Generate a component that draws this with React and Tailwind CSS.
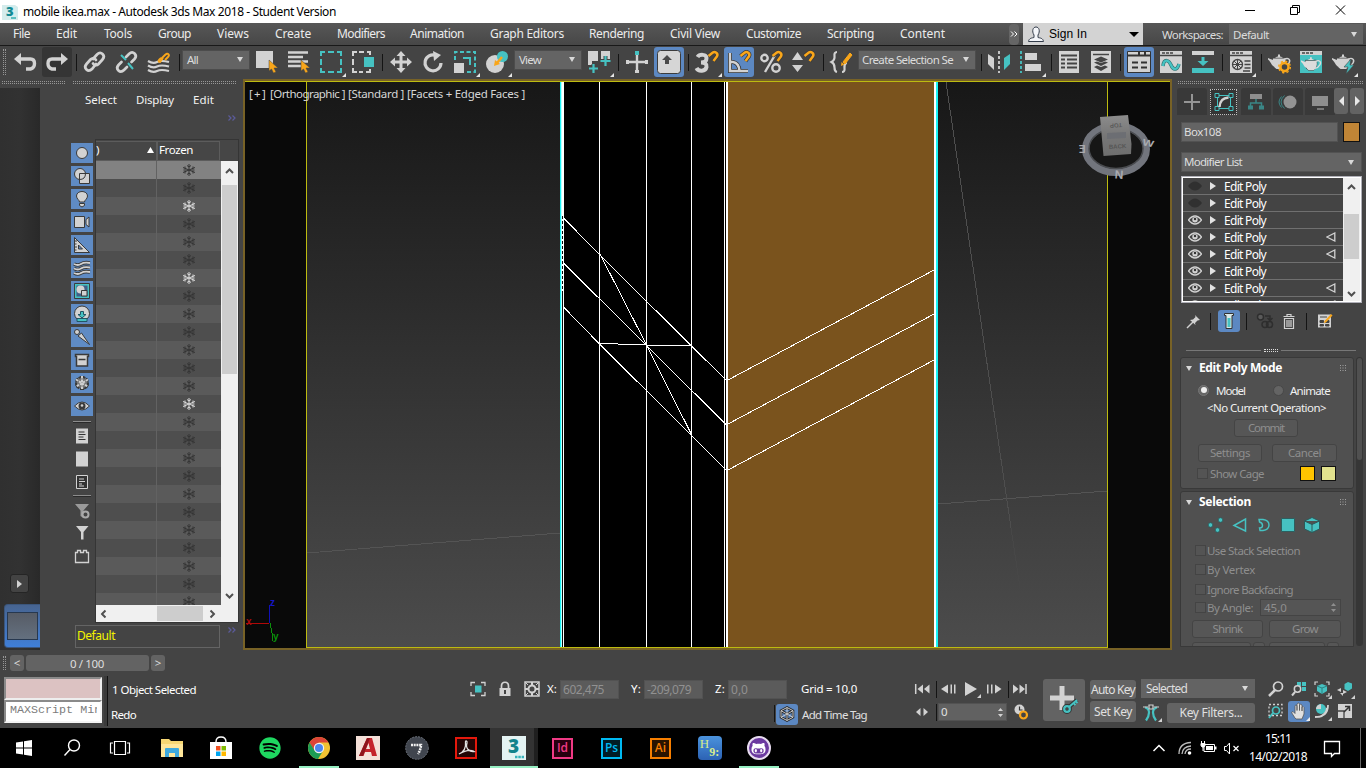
import React, { useLayoutEffect, useRef } from "react";
import { FaSpotify, FaGithubAlt } from "react-icons/fa";

const G = "#d2d2d2";
const T4 = "#46c2c2";
const OR = "#f9a61a";

/* Text run whose tracking is computed so that it spans w pixels */
function T({ w, className = "", children }) {
  const ref = useRef(null);
  useLayoutEffect(() => {
    const el = ref.current;
    if (!el || !w) return;
    el.style.letterSpacing = "0px";
    const n = el.textContent.length;
    el.style.letterSpacing = (w - el.getBoundingClientRect().width) / n + "px";
  }, [w, children]);
  return (
    <span ref={ref} className={"inline-block shrink-0 whitespace-pre leading-none " + className}>
      {children}
    </span>
  );
}

function I({ c = "", s = 22, fly, children }) {
  return (
    <svg className={"shrink-0 overflow-visible " + c} width={s} height={s} viewBox={`0 0 ${s} ${s}`} fill="none">
      {children}
      {fly && <path d={`M${s + 4} ${s}v4h-4z`} fill="#e6e6e6" />}
    </svg>
  );
}

const Sep = ({ c = "" }) => <div className={"h-[17px] w-px shrink-0 bg-[#141414] " + c} />;
const Down = ({ c = "" }) => (
  <svg className={"shrink-0 " + c} width="6" height="5" viewBox="0 0 6 5"><path d="M0 0h6L3 5z" fill="#d8d8d8" /></svg>
);
const DotsH = ({ c = "" }) => <div className={"h-[3px] border-y border-dotted border-[#969696] " + c} />;
const DotsV = ({ c = "" }) => <div className={"w-[3px] border-x border-dotted border-[#969696] " + c} />;
const Magnet = ({ x = 0, y = 0 }) => (
  <g transform={`translate(${x} ${y})`}>
    <path d="M1.500 5 5.500 1.800C8-.2 11.500 2.600 10 5.300L6.500 10" stroke="#3a3a3a" strokeWidth="4" />
    <path d="M1.500 5 5.500 1.800C8-.2 11.500 2.600 10 5.300L6.500 10" stroke={OR} strokeWidth="2.500" />
  </g>
);
const Combo = ({ c, children }) => (
  <div className={"flex h-5 shrink-0 items-center justify-between border border-[#4c4c4c] bg-[#646464] pl-1 pr-[6px] text-[11.5px] text-[#dcdcdc] -mt-[5px] " + c}>
    {children}
    <Down />
  </div>
);
const Teapot = ({ fill = G }) => (
  <g fill={fill}>
    <path d="M5 7.500h12c1.500 4 0 8.500-3 10.500H8.500C6 16.500 5 14 4.500 12z" />
    <path d="M0 7 6 9.500l0 6C3.500 14.500 3 11 0 8.500z" />
    <path d="M16 8.500c4-2.500 7 0 5 3.500-1 2-3 3.500-5.500 4" fill="none" stroke={fill} strokeWidth="1.500" />
    <path d="M7 6.800c2-1.800 6-1.800 8 0zM10 3.500h2v2h-2z" />
  </g>
);

function TitleBar() {
  return (
    <div className="flex h-[23px] items-center bg-white text-black">
      <svg className="ml-[2px] shrink-0" width="16" height="16" viewBox="0 0 16 16">
        <path d="M0 1h13l3 2v13H0z" fill="#d4ecec" />
        <text x="4" y="12" fontSize="13" className="font-['Open_Sans'] font-extrabold" fill="#128a94">3</text>
        <path d="M9 14h5" stroke="#35b0b0" strokeWidth="1.500" />
      </svg>
      <T w={313} className="ml-[5px] text-[12px]">mobile ikea.max - Autodesk 3ds Max 2018 - Student Version</T>
      <svg className="ml-auto mr-[15px] -mt-[3px]" width="106" height="12" viewBox="0 0 106 12" fill="none" stroke="#000">
        <path d="M0 6.500h10M45.500 3.500h7v7h-7zM47.500 3V1.500h7v7H53M91 1.500l9 9M100 1.500l-9 9" />
      </svg>
    </div>
  );
}

const menus = [
  ["File", 17, "ml-[13px]"], ["Edit", 21, "ml-[26px]"], ["Tools", 28, "ml-[27px]"], ["Group", 33, "ml-[26px]"],
  ["Views", 32, "ml-[26px]"], ["Create", 36, "ml-[26px]"], ["Modifiers", 48, "ml-[26px]"], ["Animation", 54, "ml-[25px]"],
  ["Graph Editors", 74, "ml-[26px]"], ["Rendering", 55, "ml-[25px]"], ["Civil View", 50, "ml-[26px]"],
  ["Customize", 55, "ml-[26px]"], ["Scripting", 47, "ml-[26px]"], ["Content", 45, "ml-[26px]"],
];

function MenuBar() {
  return (
    <div className="flex h-[23px] items-center border-b border-[#191919] bg-gradient-to-b from-[#575757] to-[#474747] text-[12px] text-[#ececec]">
      {menus.map(([t, w, c]) => <T key={t} w={w} className={c + " -mt-px"}>{t}</T>)}
      <div className="ml-[64px] flex h-[21px] w-[10px] items-center justify-center rounded-sm bg-[#656565]">
        <svg width="8" height="6" viewBox="0 0 8 6" fill="none" stroke="#fff"><path d="M1 .5 3.500 3 1 5.500M4.500.5 7 3 4.500 5.500" /></svg>
      </div>
      <div className="ml-1 flex h-[22px] w-[120px] items-center bg-[#d3d3d3] pl-[5px] pr-1 text-black">
        <svg width="16" height="16" viewBox="0 0 16 16" fill="#f4f6fa" stroke="#333c4a">
          <path d="M.5 15.500C1 12 4 12 6 11.500V9C3.500 5 5 1 8 1s4.500 4 2 8v2.500c2 .5 5 .5 5.500 4z" />
        </svg>
        <T w={38} className="ml-[5px] font-['Liberation_Sans'] text-[12px]">Sign In</T>
        <svg className="ml-auto" width="10" height="5" viewBox="0 0 10 5"><path d="M0 0h10L5 5z" /></svg>
      </div>
      <T w={61} className="ml-[19px] mt-px text-[11.5px] text-[#dcdcdc]">Workspaces:</T>
      <div className="ml-[6px] flex h-5 w-[134px] items-center justify-between bg-[#646464] pl-1 pr-[6px] text-[11.5px] text-[#dcdcdc]">
        <T w={36} className="mt-[2px]">Default</T><Down />
      </div>
    </div>
  );
}

function Toolbar() {
  const btn = "flex h-[30px] w-[30px] shrink-0 items-center justify-center rounded-[3px] ";
  return (
    <div className="flex h-[34px] items-center bg-[#444] pb-[2px] pl-[3px]">
      <DotsV c="h-[26px]" />
      <I c="ml-2"><path d="M7 8h9.500q4 0 4 4.500t-4 5.500H12" stroke={G} strokeWidth="3.400" /><path d="M0 8l7-6v12z" fill={G} /></I>
      <div className={btn + "ml-[6px] bg-[#353535]"}>
        <I><path d="M15 8H6q-4 0-4 4.500t4 5.500h4" stroke={G} strokeWidth="3.400" /><path d="M22 8l-7-6v12z" fill={G} /></I>
      </div>
      <Sep c="ml-1" />
      <I c="ml-[7px]"><g stroke={G} strokeWidth="2.700" strokeLinecap="round"><path d="M9 8l4-4.500c4-4 9 1 5.500 5l-4 4.500c-2 2-4.500 1-5.500-.5" /><path d="M12 13l-4 5c-4 4-9-1-5.500-5l4-4.500c2-2 4.500-1 5.500.5" /></g></I>
      <I c="ml-[10px]"><g stroke={G} strokeWidth="2.700" strokeLinecap="round"><path d="M10 6l3-3c4-4 9 1 5.500 5l-3 3" /><path d="M11 16l-3 3c-4 4-9-1-5.500-5l3-3" /></g><path d="M5 4l5 5M12 12l5 6" stroke={T4} strokeWidth="2" /></I>
      <I c="ml-[10px]"><path d="M0 10q5 3 9 1t12 0M0 14.500q5 3 9 1t12 0M0 19q5 3 9 1t12 0" stroke={G} strokeWidth="2.200" /><path d="M13 8l4-4c3-3 5 0 3 2l-3 3M15 7l-3 4c-2 0-2-2 1-4" stroke={OR} strokeWidth="1.900" /></I>
      <Sep c="ml-[9px]" />
      <Combo c="ml-[2px] w-[68px]"><T w={11}>All</T></Combo>
      <I c="ml-[6px]"><path d="M0 0h17v17H0z" fill={G} /><path d="M13 9v11l2.500-2 2 4 2.500-1-2-4h4z" fill={OR} stroke="#444" strokeWidth=".5" /></I>
      <I c="ml-[10px]"><path d="M0 1.500h20M0 6h15M0 10.500h20M0 15h13" stroke={G} strokeWidth="2.600" /><path d="M13 9v11l2.500-2 2 4 2.500-1-2-4h4z" fill={OR} stroke="#444" strokeWidth=".5" /></I>
      <I c="ml-[10px]" fly><path d="M1 5V1h4M8 1h6M17 1h4v4M21 8v6M21 17v4h-4M14 21H8M5 21H1v-4M1 14V8" stroke={T4} strokeWidth="2" /></I>
      <I c="ml-[10px]"><path d="M1 5V1h4M7 1h5M15 1h3v3M18 18v3h-4M11 21H7M5 21H1v-4M1 14V8" stroke={G} strokeWidth="2" /><path d="M12 6h10v10H12z" fill={T4} /></I>
      <Sep c="ml-2" />
      <I c="ml-[7px]"><path d="M11 2v18M2 11h18" stroke={G} strokeWidth="3" /><path d="M11 0l4.500 5h-9zM11 22l4.500-5h-9zM0 11l5-4.500v9zM22 11l-5-4.500v9z" fill={G} /></I>
      <I c="ml-[10px]"><path d="M13.500 4.200A8 8 0 1 0 19 12" stroke={G} strokeWidth="3.200" /><path d="M11 0l8 4-7 6z" fill={G} /></I>
      <I c="ml-[10px]" fly><path d="M1 9V1h20v20h-9" stroke={T4} strokeWidth="2" strokeDasharray="4 2.500" /><path d="M0 12h10v10H0z" fill={G} /><path d="M9 7h7v7" stroke={T4} strokeWidth="2" /></I>
      <I c="ml-[10px]" fly><circle cx="9" cy="13" r="9" fill={G} /><circle cx="16.500" cy="5.500" r="5.500" fill={T4} /><path d="M16 6l-5 6" stroke={OR} strokeWidth="2.500" /><path d="M8 15l1-6 5 4z" fill={OR} /></I>
      <Combo c="ml-[6px] w-[68px]"><T w={22}>View</T></Combo>
      <I c="ml-[6px]" fly><path d="M0 0h10v10H4v4H0zM13 0h9v8h-9z" fill={G} /><path d="M5.500 13v9M1 17.500h9M17.500 5v10M12.500 10h10" stroke="#444" strokeWidth="4" /><path d="M5.500 13v9M1 17.500h9M17.500 5v10M12.500 10h10" stroke={T4} strokeWidth="2.200" /></I>
      <Sep c="ml-2" />
      <I c="ml-[7px]"><path d="M11 3v19M1 11h20" stroke={G} strokeWidth="2.400" /><path d="M0 9h3v4H0zM19 9h3v4h-3zM9 19h4v3H9z" fill={G} /><path d="M9 0h4v4H9z" fill={T4} /></I>
      <div className={btn + "ml-[6px] bg-[#5c88c2]"}>
        <I><rect x="-.5" y="-.5" width="23" height="23" rx="3" fill="#d6d6d6" stroke="#3c3c3c" /><path d="M9 4l5 5h-3v4H7V9H4z" fill="#4a4a4a" /></I>
      </div>
      <Sep c="ml-1" />
      <I c="ml-[7px]" fly><path d="M1.500 6c2-3 9-3 9 1S8 11.500 5 11.500c4 0 6 1.500 5.500 4.500-1 4.500-8 5-10 1" stroke={G} strokeWidth="4" /><Magnet x={11} y={0} /></I>
      <div className={btn + "ml-[6px] bg-[#5c88c2]"}>
        <I><path d="M2 2v18h18M2 11h3q6 1 6.500 9" stroke="#333" strokeWidth="4" /><path d="M2 2v18h18M2 11h3q6 1 6.500 9" stroke={G} strokeWidth="2.400" /><Magnet x={11} y={0} /></I>
      </div>
      <I c="ml-[6px]"><circle cx="4.500" cy="7" r="3.200" stroke={G} strokeWidth="2.400" /><circle cx="16" cy="17" r="3.700" stroke={G} strokeWidth="2.400" /><path d="M15 4L5 21" stroke={G} strokeWidth="2.400" /><Magnet x={11} y={0} /></I>
      <I c="ml-[10px]"><path d="M5.500 1l5.500 8H0zM5.500 21l5.500-7H0z" fill={G} /><Magnet x={11} y={0} /></I>
      <Sep c="ml-[9px]" />
      <I c="ml-[7px]"><path d="M6 1Q3 1 3.500 5t-3 6q3 1.500 3 5.500T6 21M11 21q3 0 2.500-4t2-5.500" stroke={G} strokeWidth="2.200" /><path d="M12 11l2 2 7-9-2-2z" fill={OR} stroke={OR} /><path d="M10 15l.5-4 3 2.500z" fill={OR} /></I>
      <Combo c="ml-[5px] w-[118px]"><T w={91} className="-ml-px">Create Selection Se</T></Combo>
      <Sep c="ml-[5px]" />
      <I c="ml-[6px]"><path d="M0 3l6 4v12l-6-6z" fill={G} /><path d="M22 3l-6 4v12l6-6z" fill={T4} /><path d="M11 0v22" stroke={G} strokeWidth="1.800" strokeDasharray="3 2" /></I>
      <I c="ml-[10px]" fly><path d="M1 0v22" stroke={T4} strokeWidth="1.800" strokeDasharray="3 2" /><path d="M5 2h12v7H5zM5 13h16v7H5z" fill={G} /></I>
      <Sep c="ml-[9px]" />
      <I c="ml-[6px]"><path d="M1 0h20v22H1z" fill={G} /><path d="M3 4.500h16M3 8.500h4M9 8.500h10M3 12.500h4M9 12.500h10M3 16.500h4M9 16.500h10" stroke="#444" strokeWidth="2" /></I>
      <I c="ml-[10px]"><path d="M1 0h20v22H1z" fill={G} /><path d="M3 3.500h16" stroke="#444" strokeWidth="1.500" /><path d="M11 5.500l7 3-7 3-7-3zM4 11.500l3-1 4 1.500 4-1.500 3 1-7 3.500zM4 16l3-1.500 4 1.500 4-1.500 3 1.500-7 4z" fill="#444" /></I>
      <Sep c="ml-2" />
      <div className={btn + "ml-[3px] bg-[#5c88c2]"}>
        <I><path d="M-.5.500h23v21h-23z" fill={G} stroke="#333" /><path d="M0 4.500h22M11 0v4M17 0v4M4 11.500h6M13 11.500h6M4 16.500h6M13 16.500h6" stroke="#333" strokeWidth="2" /></I>
      </div>
      <I c="ml-[6px]"><path d="M0 0h22v22H0z" fill={G} /><path d="M0 4.500h22M2 2h3M6 2h3M10 2h3" stroke="#444" strokeWidth="1.500" /><path d="M3 15c1-8 6-6 8-1s6 6 8-1" stroke="#2e6f6f" strokeWidth="3.500" /><path d="M3 15c1-8 6-6 8-1s6 6 8-1" stroke={T4} strokeWidth="2.300" /></I>
      <I c="ml-[10px]"><path d="M0 0h22v4H0z" fill={G} /><path d="M0 17h22v5H0zM9.500 6h3v4h4L11 15l-5.500-5h4z" fill={T4} /></I>
      <Sep c="ml-2" />
      <I c="ml-[7px]" fly><path d="M0 0h22v22H0z" fill={G} /><path d="M0 4.500h22M2 2h3M6 2h3M10 2h3M14.500 10h6M14.500 13.500h6M14.500 17h6M13 20h7" stroke="#444" strokeWidth="1.500" /><circle cx="7.500" cy="13.500" r="5" stroke="#444" strokeWidth="1.300" /><path d="M4 10l7 7M11 10l-7 7M7.500 8.500v10M2.500 13.500h10" stroke="#444" /></I>
      <Sep c="ml-[9px]" />
      <I c="ml-[6px]"><Teapot /><circle cx="16.500" cy="16" r="4" fill="#444" stroke={OR} strokeWidth="2.500" /><circle cx="16.500" cy="16" r="5.800" stroke={OR} strokeWidth="1.500" strokeDasharray="2.200 2.350" /></I>
      <I c="ml-[10px]"><path d="M0 0h22v22H0z" fill={T4} /><path d="M0 0h22v4H0z" fill={G} /><path d="M2 2h3M6 2h3M10 2h3" stroke="#444" strokeWidth="1.500" /><g transform="translate(1 3) scale(.9)"><path d="M5 7h12c1.500 4 0 8.500-3 11H8.500C6 17 5 14 4.500 12z" stroke="#333" /><Teapot fill="#dcdcdc" /></g></I>
      <I c="ml-[10px]" fly><Teapot /><path d="M19 8l-7 8h4l-2 7 8-9h-4z" fill={T4} stroke="#444" strokeWidth=".6" /></I>
    </div>
  );
}

const Flake = ({ color }) => (
  <svg width="12" height="12" viewBox="0 0 12 12" fill="none" stroke={color}>
    <path d="M6 0v12M0 3.500l12 5M12 3.500l-12 5M4 1.500l2 1.500 2-1.500M4 10.500l2-1.500 2 1.500M.5 6h3M8.500 6h3M2 2.500v2M10 2.500v2M2 7.500v2M10 7.500v2" />
  </svg>
);
const Chev = ({ r = "" }) => (
  <svg className={"shrink-0 " + r} width="9" height="6" viewBox="0 0 9 6" fill="none" stroke="#505050" strokeWidth="2"><path d="M1 5l3.500-3.500L8 5" /></svg>
);
const More = ({ c }) => (
  <svg className={c} width="8" height="6" viewBox="0 0 8 6" fill="none" stroke="#5c5c9c" strokeWidth="1.200"><path d="M.5.500 3 3 .5 5.500M4.500.5 7 3 4.500 5.500" /></svg>
);

const D = "#3a3a3a";
const filters = [
  <circle cx="8" cy="8" r="5.500" fill={G} stroke={D} />,
  <><circle cx="6" cy="6" r="5.500" fill={G} stroke={D} /><path d="M5.500 5.500h10v10h-10z" fill={G} stroke={D} /><path d="M5.500 11.500q6 0 6-6" stroke={D} /></>,
  <><path d="M5.500 11c0-2-3-3-3-6 0-6 11-6 11 0 0 3-3 4-3 6z" fill={G} stroke={D} /><path d="M5.500 12.500h5v2l-2.500 1.500-2.500-1.500z" fill={G} stroke={D} /></>,
  <path d="M.5 2.500h10v11H.5zM12 5.500l3-2.500v10l-3-2.500z" fill={G} stroke={D} />,
  <path d="M.5.500l15 15H.5zM4.500 8v4h4zM1 4h2M1 7h1.500M1 10h2M1 13h1.500" fill={G} stroke={D} fillRule="evenodd" />,
  <><path d="M0 4q4 2 7 0t9-1M0 8.500q4 2 7 0t9-1M0 13q4 2 7 0t9-1" stroke={D} strokeWidth="3.600" /><path d="M0 4q4 2 7 0t9-1M0 8.500q4 2 7 0t9-1M0 13q4 2 7 0t9-1" stroke={G} strokeWidth="1.800" /></>,
  <><path d="M.5.500h15v15H.5z" stroke={D} /><path d="M1.700 1.700h12.600v12.600H1.700z" fill="#3f5f88" stroke={T4} strokeWidth="1.500" /><circle cx="6.500" cy="6.500" r="4" fill={G} /><path d="M7.500 7.500h5.500v5.500H7.500z" fill={G} stroke={D} /></>,
  <><circle cx="8" cy="7.500" r="7.500" fill={G} stroke={D} /><path d="M6.500 5.500h3v3h2.500L8 12 4 8.500h2.500z" fill={T4} stroke="#256" /><path d="M3 12.500h10v3H3z" fill={T4} stroke="#256" /></>,
  <><circle cx="3" cy="3" r="2.500" fill={G} stroke={D} /><path d="M4 7l3.500-3 8 11.500z" fill={G} stroke={D} /></>,
  <path d="M1.500 2.500h13v2h-1v9.500h-11V4.500h-1zM4.500 7.500h7" fill={G} stroke={D} strokeWidth="1.500" />,
  <><path d="M8 1v14M2 4.500l12 7M14 4.500l-12 7" stroke={D} strokeWidth="4" /><circle cx="8" cy="8" r="6" fill="#777" stroke={D} strokeWidth="2" strokeDasharray="3 1" /><path d="M8 1v14M2 4.500l12 7M14 4.500l-12 7" stroke="#cfcfcf" strokeWidth="2" strokeDasharray="2.500 1" /></>,
  <><path d="M.5 8q7.500-8 15 0-7.500 8-15 0z" fill={G} stroke={D} /><circle cx="8" cy="8" r="3.500" fill={D} /><circle cx="8" cy="7.500" r="1.300" fill={G} /></>,
];

function LeftPanel() {
  const sep = "h-[2px] w-[18px] border-t border-[#8c8c8c] bg-[#2a2a2a]";
  return (
    <div className="flex h-[570px] w-[243px] shrink-0 flex-col bg-[#444]">
      <div className="flex h-[8px] items-start pt-px">
        <DotsH c="ml-[2px] w-[63px]" /><DotsH c="ml-2 w-[163px]" />
      </div>
      <div className="flex h-[562px]">
        <div className="flex w-10 flex-col bg-gradient-to-r from-[#303030] via-[#323232] to-[#292929] pb-[2px]">
          <div className="ml-[10px] mt-[486px] flex h-[19px] w-[19px] items-center justify-center rounded-[3px] border border-[#252525] bg-[#434343]">
            <svg width="5" height="8" viewBox="0 0 5 8"><path d="M0 0l5 4-5 4z" fill={G} /></svg>
          </div>
          <div className="ml-1 mt-[11px] h-11 rounded-l border border-r-0 border-[#3b567c] bg-gradient-to-b from-[#476490] to-[#3f7fd8] pl-[2px] pt-[7px]">
            <div className="h-7 w-[31px] border border-[#27384f] bg-gradient-to-b from-[#575c66] to-[#64707f]" />
          </div>
        </div>
        <div className="flex w-[203px] flex-col">
          <div className="flex h-[24px] items-center text-[11.500px] text-[#f2f2f2]">
            <T w={32} className="ml-[45px]">Select</T><T w={38} className="ml-[19px]">Display</T><T w={21} className="ml-[19px]">Edit</T>
          </div>
          <More c="ml-[188px] mt-[3px]" />
          <div className="mt-[18px] flex h-[484px]">
            <div className="ml-[31px] flex w-[22px] flex-col items-center pt-1">
              {filters.map((f, i) => (
                <div key={i} className="mb-[3px] flex h-5 w-[22px] shrink-0 items-center justify-center bg-[#5f8bc4]"><I s={16}>{f}</I></div>
              ))}
              <div className={sep + " mt-[2px]"} />
              <I s={16} c="mt-[5px]"><path d="M2 .5h12v15H2z" fill={G} /><path d="M4.500 4h6M4.500 6.500h7M4.500 9h5M4.500 11.500h7" stroke="#333" /></I>
              <I s={16} c="mt-[7px]"><path d="M2 .5h12v15H2z" fill={G} /></I>
              <I s={16} c="mt-[7px]"><path d="M2.500 1.500h11v13h-11z" fill="#333" stroke={G} /><path d="M5 5h5M5 7.500h6M5 10h3M5 12h5" stroke={G} /></I>
              <div className={sep + " mt-[5px]"} />
              <I s={16} c="mt-[6px]"><path d="M1 1h14L9.500 7.500V15l-3-2V7.500z" fill="#9a9a9a" /><circle cx="11.500" cy="11.500" r="3" fill="#444" stroke="#aaa" strokeWidth="2" /></I>
              <I s={16} c="mt-[6px]"><path d="M2 1h12.500L9.500 7v7.500h-2.500V7z" fill={G} /></I>
              <I s={16} c="mt-[8px]"><path d="M1.500 3.500h2v-2h3v2h3v-2h3v2h2v10h-13z" stroke={G} strokeWidth="1.300" /></I>
            </div>
            <div className="ml-[2px] flex w-[144px] flex-col border border-[#353535] bg-[#464646]">
              <div className="flex h-[21px] items-center">
                <div className="flex h-[20px] w-[61px] items-center justify-between border border-l-0 border-[#5c5c5c] pb-[2px] pr-[2px] text-[11.500px] text-white">
                  <T w={3}>)</T>
                  <svg width="7" height="6" viewBox="0 0 7 6"><path d="M0 6h7L3.500 0z" fill="#fff" /></svg>
                </div>
                <div className="flex h-[20px] w-[63px] items-center border border-[#5c5c5c] pb-[2px] pl-px text-[11.500px] text-white"><T w={34}>Frozen</T></div>
              </div>
              <div className="flex h-[444px]">
                <div className="h-[444px] w-[125px] overflow-hidden">
                  {Array.from({ length: 25 }, (_, i) => {
                    const bg = i === 0 ? "bg-[#828282]" : i % 2 ? "bg-[#4e4e4e]" : "bg-[#5a5a5a]";
                    return (
                      <div key={i} className={"flex h-[18px] " + bg}>
                        <div className="h-[18px] w-[61px] border-r border-[#626262]" />
                        <div className="flex w-[63px] items-center justify-center">
                          <Flake color={[2, 6, 13].includes(i) ? "#dcdcdc" : i === 0 ? "#333" : "#343434"} />
                        </div>
                      </div>
                    );
                  })}
                </div>
                <div className="flex w-[17px] flex-col items-center bg-[#f0f0f0] pt-[7px]">
                  <Chev /><div className="mt-[11px] h-[189px] w-[15px] shrink-0 bg-[#cdcdcd]" /><Chev r="mt-[219px] rotate-180" />
                </div>
              </div>
              <div className="flex h-[17px] items-center bg-[#f0f0f0]">
                <Chev r="ml-[3px] -rotate-90" /><div className="ml-[49px] h-[15px] w-[46px] bg-[#cdcdcd]" /><Chev r="ml-[5px] rotate-90" />
              </div>
            </div>
          </div>
          <div className="mt-[2px] flex h-[23px]">
            <div className="ml-[35px] flex w-[145px] items-center border border-[#646464] pl-px text-[12px] text-[#f4f400]"><T w={38} className="-mt-[2px]">Default</T></div>
            <More c="ml-2 mt-[2px]" />
          </div>
        </div>
      </div>
    </div>
  );
}

function Viewport() {
  return (
    <div className="relative h-[571px] w-[929px] shrink-0 bg-[#786226]">
      <svg width="929" height="571" viewBox="243 79 929 571" shapeRendering="crispEdges" fill="none">
        <defs>
          <linearGradient id="sky" x1="0" y1="0" x2="0" y2="1"><stop offset="0" stopColor="#171717" /><stop offset="1" stopColor="#4c4c4c" /></linearGradient>
          <linearGradient id="cube" x1="0" y1="0" x2="0" y2="1"><stop offset="0" stopColor="#8c8c8c" /><stop offset=".5" stopColor="#777" /><stop offset="1" stopColor="#6e6e6e" /></linearGradient>
        </defs>
        <path d="M245 81h925v567H245z" fill="#090909" />
        <path d="M306 81h802v567H306z" fill="url(#sky)" />
        <path d="M307 553l253-20M938 504l169-13" stroke="#545454" />
        <path d="M946 82l65 446" stroke="#4e4e4e" /><path d="M1011 528l9 60" stroke="#474747" />
        <path d="M564 82h161v565H564z" fill="#000" />
        <path d="M727 82h208v565H727z" fill="#7a531d" />
        <path d="M560 82h2v565h-2zM936 82h2v565h-2z" fill="#18f4f6" />
        <path d="M561 82h1v565h-1z" fill="#b8ffff" />
        <path d="M562 82h1v565h-1z" fill="#0a0a0a" />
        <path d="M562 82h1v132h-1z" fill="#fff" /><path d="M562.500 214v80" stroke="#fff" strokeDasharray="2 3" />
        <path d="M563 82h1v565h-1zM599 82h1v565h-1zM646 82h1v565h-1zM691 82h1v565h-1zM724 82h1v565h-1zM726 82h2v565h-2zM934 82h2v565h-2z" fill="#fff" />
        <path d="M725 82h1v565h-1z" fill="#000" />
        <g stroke="#fff">
          <path d="M563 217.500l36 36.500" /><path d="M599 254l92 91.500" /><path d="M691 345.500l35 34.500" />
          <path d="M563 262.500l83 82.500" /><path d="M646 345l80 79.500" />
          <path d="M563 306.500l36 37" /><path d="M599 343.500l92 91.500" /><path d="M691 435l35 35" />
          <path d="M600 254l46.500 91" /><path d="M646.500 345l45 89.500" /><path d="M599 343.500h19" /><path d="M618 344.500h28" /><path d="M646 345.500h45.500" />
          <path d="M727 380.500l208-111M727 424.500l208-111M727 470.500l208-111" />
        </g>
        <path d="M306.500 81.500h801v566h-801z" stroke="#bdbb10" />
        <path d="M245 81.500h925" stroke="#bdbb10" />
        <path d="M245 648.500h925" stroke="#786226" />
        <g shapeRendering="auto">
          <ellipse cx="1116" cy="149" rx="27" ry="20" fill="#161616" />
          <ellipse cx="1116" cy="149" rx="30.500" ry="23.500" stroke="#72757d" strokeWidth="7" />
          <ellipse cx="1116" cy="148.500" rx="27" ry="20" stroke="#4a4c50" strokeWidth="1.500" />
          <path d="M1100 117l28-2 3.500 29-.5 10-27.500 2z" fill="url(#cube)" />
          <path d="M1107 133l19-1v6l-19 1z" fill="#6c6e73" />
          <g className="font-['Liberation_Sans'] font-bold" fill="#a9abb0">
            <text transform="translate(1085.500 145) rotate(180)" fontSize="10">E</text>
            <text transform="translate(1142 145) rotate(12) scale(1.100 .85)" fontSize="11">W</text>
            <text transform="translate(1114.500 178.500) rotate(3)" fontSize="12">N</text>
            <text transform="translate(1122 123) rotate(177)" fontSize="6" fill="#5a5a5a">TOP</text>
            <text transform="translate(1109 149) rotate(-3)" fontSize="6" fill="#555">BACK</text>
          </g>
        </g>
        <path d="M246 623.500h23" stroke="#b00808" /><path d="M269.500 605v18" stroke="#1010b8" /><path d="M270.500 623v5M271.500 628v5M272.500 633v8" stroke="#0a900a" />
        <g className="font-['Liberation_Sans'] font-bold" fontSize="10">
          <text x="246" y="625" fill="#a80c0c">x</text><text x="270" y="606" fill="#1616c8">z</text><text x="273" y="640" fill="#0a900a">y</text>
        </g>
      </svg>
      <div className="absolute left-[6px] top-[9px] flex gap-[3px] text-[11.500px] text-[#d6d6d6]">
        <T w={18}>[+]</T><T w={75}>[Orthographic ]</T><T w={56}>[Standard ]</T><T w={118}>[Facets + Edged Faces ]</T>
      </div>
    </div>
  );
}

const Check = ({ c = "" }) => <div className={"h-[11px] w-[11px] shrink-0 border border-[#444] bg-[#545454] " + c} />;
const Btn = ({ c, children }) => (
  <div className={"flex shrink-0 items-center justify-center rounded-[3px] border border-[#444] bg-[#565656] text-[11.500px] text-[#8e8e8e] " + c}>{children}</div>
);
const Grip6 = () => (
  <svg width="6" height="6" viewBox="0 0 6 6" stroke="#a0a0a0" strokeDasharray="1 1.500"><path d="M0 .5h6M0 3h6M0 5.500h6" /></svg>
);
const RollTitle = ({ w, children }) => (
  <div className="flex h-5 shrink-0 items-center pl-[5px] pr-[7px] text-[12px] font-bold text-white">
    <Down /><T w={w} className="ml-[7px]">{children}</T><div className="ml-auto"><Grip6 /></div>
  </div>
);

function StackRow({ dim, tri }) {
  return (
    <div className="flex h-[17px] shrink-0 items-center border-b border-[#707070] pl-[5px]">
      <svg width="14" height="10" viewBox="0 0 14 10">
        {dim ? <path d="M0 5q7-9 14 0-7 9-14 0z" fill="#303030" /> : <><path d="M.5 5q6.500-8 13 0-6.500 8-13 0z" fill="none" stroke={G} strokeWidth="1.400" /><circle cx="7" cy="4.800" r="2.700" fill={G} /><circle cx="7" cy="4" r="1.200" fill="#333" /></>}
      </svg>
      <svg className="ml-[8px]" width="6" height="8" viewBox="0 0 6 8"><path d="M0 0l6 4-6 4z" fill="#e2e2e2" /></svg>
      <T w={42} className="ml-[8px] mt-px text-[12px] text-white">Edit Poly</T>
      {tri && <svg className="ml-[60px]" width="10" height="10" viewBox="0 0 10 10"><path d="M.8 5l8-4v8z" fill="none" stroke={G} strokeWidth="1.300" /></svg>}
    </div>
  );
}

function RightPanel() {
  const tab = "flex h-[27px] w-[30px] shrink-0 items-center justify-center rounded-t-[3px] bg-[#393939] ";
  return (
    <div className="flex h-[570px] w-[194px] shrink-0 flex-col overflow-hidden bg-[#444]">
      <DotsH c="ml-[6px] mt-px w-[185px] shrink-0" />
      <div className="mt-[4px] flex h-[27px] shrink-0 pl-[5px]">
        <div className={tab}><I s={18}><path d="M9 1v16M1 9h16" stroke="#959595" strokeWidth="2" /></I></div>
        <div className="ml-[3px] mt-px flex h-[26px] w-[27px] shrink-0 items-center justify-center border border-dotted border-[#c0c0c0] bg-[#353535]">
          <I s={18}><path d="M2.500 2.500h13v13h-13z" stroke={T4} /><path d="M0 .5h4v4H0zM14 .5h4v4h-4zM0 13.500h4v4H0zM14 13.500h4v4h-4z" fill="#353535" stroke={T4} /><path d="M4.500 14Q5 5 13.500 4.500" stroke={G} strokeWidth="2.500" /></I>
        </div>
        <div className={tab + "ml-[4px]"}><I s={18}><path d="M3 1h12v5H3z" fill="#8e8e8e" /><path d="M9 6v4M3.500 14v-4h11v4" stroke="#3a8686" strokeWidth="1.500" /><path d="M1 12.500h5v4H1zM12 12.500h5v4h-5z" fill="#3a8686" /></I></div>
        <div className={tab + "ml-[2px]"}><I s={18}><circle cx="11" cy="9" r="6.500" fill="#939393" /><path d="M5.500 2.500q-7 6.500 0 13M2.500 3.500q-5 5.500 0 11" stroke="#3a8686" /></I></div>
        <div className={tab + "ml-[2px]"}><I s={18}><path d="M1 3h16v10H1z" fill="#8e8e8e" /><path d="M6 16h7" stroke="#8e8e8e" strokeWidth="1.500" /></I></div>
        <div className="-ml-px flex h-[26px] w-[14px] shrink-0 items-center justify-center rounded-[3px] bg-[#636363]"><svg width="5" height="10" viewBox="0 0 5 10"><path d="M5 0v10L0 5z" fill="#e8e8e8" /></svg></div>
        <div className="ml-[2px] flex h-[26px] w-[14px] shrink-0 items-center justify-center rounded-[3px] bg-[#636363]"><svg width="5" height="10" viewBox="0 0 5 10"><path d="M0 0v10l5-5z" fill="#e8e8e8" /></svg></div>
      </div>
      <div className="mt-[7px] flex h-5 shrink-0 pl-[9px]">
        <div className="flex h-5 w-[157px] items-center border border-[#525252] bg-[#646464] pl-[2px] text-[11.500px] text-[#dedede]"><T w={37}>Box108</T></div>
        <div className="ml-[5px] h-5 w-[17px] border border-[#111] bg-[#c08536]" />
      </div>
      <div className="ml-[9px] mt-[10px] flex h-5 w-[181px] shrink-0 items-center justify-between border border-[#525252] bg-[#646464] pl-[2px] pr-[7px] text-[11.500px] text-[#dedede]"><T w={58}>Modifier List</T><Down /></div>
      <div className="ml-[9px] mt-[4px] flex h-[127px] w-[181px] shrink-0 border-2 border-white outline outline-1 -outline-offset-1 outline-[#b0b0b8]">
        <div className="flex w-[160px] flex-col overflow-hidden bg-[#444]">
          <StackRow dim /><StackRow dim /><StackRow /><StackRow tri /><StackRow tri /><StackRow /><StackRow tri /><StackRow tri />
        </div>
        <div className="flex w-[17px] flex-col items-center bg-[#f0f0f0]">
          <Chev r="mt-[6px]" /><div className="mt-[24px] h-[45px] w-[15px] bg-[#cdcdcd]" /><Chev r="mt-[32px] rotate-180" />
        </div>
      </div>
      <div className="mt-[7px] flex h-[22px] shrink-0 items-center">
        <I s={16} c="ml-[14px]"><path d="M1 15l6-6" stroke={G} strokeWidth="1.500" /><path d="M9 2l5 5-2.500.5-2.500 2.500.5 2L4 7l3-.5 2.500-2.500z" fill={G} /></I>
        <Sep c="ml-[8px]" />
        <div className="ml-[7px] flex h-[22px] w-[22px] items-center justify-center rounded-[3px] bg-[#5c88c2]"><I s={16}><path d="M3.500.500h9v2h-1.500v13H5v-13H3.500z" fill="#d8e8e8" stroke="#333" /><path d="M6.500 5h3v9h-3z" fill={T4} /></I></div>
        <Sep c="ml-[6px]" />
        <I s={16} c="ml-[10px]"><g stroke="#2e2e2e" strokeWidth="1.500"><circle cx="3.500" cy="4" r="3" fill="#5a5a5a" /><circle cx="8" cy="11.500" r="3" /><circle cx="12.500" cy="11.500" r="3" /><path d="M8 3h5v4M10.500 5l2.500 2.500L15.500 5" /></g></I>
        <I s={16} c="ml-[8px]"><path d="M2.500 3.500h11M6 3V1.500h4V3M3.500 5.500h9v10h-9zM6 7v7M8 7v7M10 7v7" stroke={G} strokeWidth="1.200" /></I>
        <Sep c="ml-[9px]" />
        <I s={16} c="ml-[10px]"><path d="M1 1.500h13v13H1z" fill={G} /><path d="M3 4h7M3 7.500h3.500v2H3zM8.500 7.500H12v2H8.500zM3 11.500h3.500v1.500H3zM8.500 11.500H12v1.500H8.500z" fill="#444" stroke="#444" /><path d="M7.500 8L14 1l1.500 1.500-6.500 7-2 .5z" fill={OR} /></I>
      </div>
      <div className="mt-[16px] flex h-[5px] shrink-0 items-center pl-[14px]">
        <div className="h-px w-[75px] bg-[#777]" /><div className="ml-[3px] h-[3px] w-[14px] border-y border-dotted border-[#ddd]" /><div className="ml-[3px] h-px w-[75px] bg-[#777]" />
      </div>
      <div className="mt-[4px] flex h-[290px] shrink-0">
        <div className="ml-[8px] flex w-[174px] flex-col">
          <div className="h-[132px] shrink-0 rounded-[3px] border border-[#393939] bg-[#505050] text-[11.500px] text-[#f0f0f0]">
            <RollTitle w={83}>Edit Poly Mode</RollTitle>
            <div className="mt-[4px] flex h-[16px] items-center">
              <div className="ml-[17px] flex h-[11px] w-[11px] items-center justify-center rounded-full border border-[#777] bg-[#666]"><div className="h-[6px] w-[6px] rounded-full bg-[#efefef]" /></div>
              <T w={29} className="ml-[7px] mt-px">Model</T>
              <div className="ml-[28px] h-[11px] w-[11px] rounded-full border border-[#484848] bg-[#646464]" />
              <T w={40} className="ml-[6px] mt-px">Animate</T>
            </div>
            <div className="mt-px h-[16px] pl-[26px]"><T w={119}>&lt;No Current Operation&gt;</T></div>
            <div className="flex pl-[53px] pt-[4px]"><Btn c="h-[18px] w-[64px]"><T w={36}>Commit</T></Btn></div>
            <div className="mt-[7px] flex pl-[17px]"><Btn c="h-[18px] w-[64px]"><T w={40}>Settings</T></Btn><Btn c="ml-[10px] h-[18px] w-[65px]"><T w={33}>Cancel</T></Btn></div>
            <div className="mt-[3px] flex h-[16px] items-center text-[#8e8e8e]"><Check c="ml-[16px]" /><T w={54} className="ml-[2px] mt-px">Show Cage</T>
              <div className="ml-[36px] h-[15px] w-[15px] border border-[#111] bg-[#ffc400]" /><div className="ml-[6px] h-[15px] w-[15px] border border-[#111] bg-[#e2e28e]" /></div>
          </div>
          <div className="mt-[2px] flex h-[156px] shrink-0 flex-col overflow-hidden rounded-t-[3px] border border-[#393939] bg-[#505050] text-[11.500px] text-[#8e8e8e]">
            <RollTitle w={52}>Selection</RollTitle>
            <div className="mt-[5px] flex h-4 shrink-0 items-center pl-[27px]">
              <I s={16}><g fill={T4} stroke="#2a5c5c" strokeWidth=".8"><circle cx="2.500" cy="8" r="2.300" /><circle cx="12.500" cy="3" r="2.300" /><circle cx="9.500" cy="13" r="2.300" /></g></I>
              <I s={16} c="ml-[8px]"><path d="M2 8.500L13.500 2v12z" stroke={T4} strokeWidth="1.500" /></I>
              <I s={16} c="ml-[8px]"><path d="M3 2.500h4c8 1 8 10 0 11H4l-.5-2.500c4 0 4-5 0-6z" stroke={T4} strokeWidth="1.400" /></I>
              <I s={16} c="ml-[8px]"><path d="M1.500 1.500h13v13h-13z" fill={T4} stroke="#2c6060" /></I>
              <I s={16} c="ml-[8px]"><path d="M8 .5l7.500 3.500v8L8 15.500.5 12V4zM.5 4L8 7.500 15.500 4M8 7.500v8" fill={T4} stroke="#2c5a5a" /></I>
            </div>
            <div className="mt-[9px] flex h-[16px] shrink-0 items-center"><Check c="ml-[14px]" /><T w={93} className="ml-px mt-[2px]">Use Stack Selection</T></div>
            <div className="mt-[3px] flex h-[16px] shrink-0 items-center"><Check c="ml-[14px]" /><T w={48} className="ml-px mt-[2px]">By Vertex</T></div>
            <div className="mt-[4px] flex h-[16px] shrink-0 items-center"><Check c="ml-[14px]" /><T w={86} className="ml-px mt-[2px]">Ignore Backfacing</T></div>
            <div className="mt-[2px] flex h-[17px] shrink-0 items-center"><Check c="ml-[14px]" /><T w={46} className="ml-px mt-px">By Angle:</T>
              <div className="ml-[7px] flex h-[17px] w-[81px] items-center justify-between border border-[#444] bg-[#555] pl-[3px] pr-1"><T w={23}>45,0</T><Spin c="#8e8e8e" /></div></div>
            <div className="mt-[4px] flex shrink-0 pl-[11px]"><Btn c="h-[18px] w-[71px]"><T w={30}>Shrink</T></Btn><Btn c="ml-[6px] h-[18px] w-[72px]"><T w={26}>Grow</T></Btn></div>
            <div className="mt-[4px] flex shrink-0 pl-[11px]"><Btn c="h-4 w-[59px]" /><Btn c="ml-[2px] h-4 w-3" /><Btn c="ml-[4px] h-4 w-[56px]" /><Btn c="ml-[2px] h-4 w-3" /></div>
          </div>
        </div>
        <div className="ml-[2px] h-[289px] w-[7px] rounded-full bg-[#363636] p-px"><div className="h-[102px] rounded-full bg-[#505050]" /></div>
      </div>
    </div>
  );
}

const Spin = ({ c = G }) => <svg width="5" height="9" viewBox="0 0 5 9"><path d="M2.500 0L5 3H0zM2.500 9L5 6H0z" fill={c} /></svg>;
const Field = ({ w, children }) => (
  <div className="ml-[3px] flex h-[19px] w-[59px] items-center border border-[#525252] bg-[#5b5b5b] pl-[2px] text-[12px] text-[#919191]"><T w={w} className="mt-px">{children}</T></div>
);

function StatusBar() {
  const key = "flex items-center justify-center rounded-[3px] bg-[#636363] text-[12px] text-[#e0e0e0] ";
  return (
    <div className="flex h-[78px] flex-col bg-[#444]">
      <div className="flex h-[26px] items-center pl-[3px] text-[11.500px] text-[#dedede]">
        <DotsV c="h-[14px]" />
        <div className="ml-[4px] flex h-4 w-[14px] items-center justify-center rounded-[3px] bg-[#636363]">&lt;</div>
        <div className="ml-[2px] flex h-4 w-[123px] items-center justify-center rounded-[3px] bg-[#636363]"><T w={34} className="-ml-px mt-px">0 / 100</T></div>
        <div className="ml-[2px] flex h-4 w-[14px] items-center justify-center rounded-[3px] bg-[#636363]">&gt;</div>
      </div>
      <div className="flex h-[52px]">
        <div className="ml-1 flex w-[98px] flex-col pt-px">
          <div className="h-[23px] border-2 border-b-[#eee] border-l-[#8a8a8a] border-r-[#eee] border-t-[#8a8a8a] bg-[#dcc2c2]" />
          <div className="h-[23px] overflow-hidden border-2 border-b-[#f4f4f4] border-l-[#8a8a8a] border-r-[#f4f4f4] border-t-[#8a8a8a] bg-white pl-1 pr-[3px]">
            <div className="h-[19px] w-[87px] overflow-hidden whitespace-pre font-['Liberation_Mono'] text-[11.700px] leading-[17px] text-[#7c7c7c]">MAXScript Min</div>
          </div>
        </div>
        <div className="ml-[2px] h-[50px] w-1 border-r border-[#111] bg-[#3a3a3a]" />
        <div className="flex w-[363px] flex-col pl-[3px] text-[11.500px] text-white">
          <T w={84} className="ml-px mt-[8px] self-start">1 Object Selected</T>
          <T w={25} className="mt-[13px] self-start">Redo</T>
        </div>
        <div className="flex w-[444px] flex-col text-[11.500px] text-white">
          <div className="flex h-[26px] items-center">
            <I s={16} c="-ml-px"><path d="M1 5V1.500h4M11 1.500h4V5M15 11v3.500h-4M5 14.500H1V11" stroke={G} strokeWidth="1.300" /><path d="M5 4.500h6.500v7H5z" fill={T4} /></I>
            <I s={16} c="ml-[11px]"><path d="M2.500 7h11v8h-11z" fill={G} /><path d="M4.500 7V5c0-5 7-5 7 0v2" stroke={G} strokeWidth="1.700" /><path d="M8 9v4" stroke="#333" strokeWidth="1.800" /></I>
            <I s={16} c="ml-[11px]"><path d="M1 1h14v14H1z" fill="#444" stroke={G} strokeWidth="1.500" /><circle cx="8" cy="8" r="3.500" stroke={G} strokeWidth="2" /><path d="M8 1v3M8 12v3M1 8h3M12 8h3" stroke={G} strokeWidth="2" /><path d="M1 1l3 3M15 1l-3 3M1 15l3-3M15 15l-3-3" stroke={G} /></I>
            <T w={10} className="ml-[7px]">X:</T><Field w={41}>602,475</Field>
            <T w={10} className="ml-[12px]">Y:</T><Field w={44}>-209,079</Field>
            <T w={10} className="ml-[12px]">Z:</T><Field w={17}>0,0</Field>
            <T w={56} className="ml-[14px]">Grid = 10,0</T>
          </div>
          <div className="flex h-[24px] items-center pl-[303px]">
            <Sep c="-mt-px" />
            <div className="ml-px flex h-[21px] w-[22px] items-center justify-center rounded-[3px] bg-[#5c88c2]"><I s={16}><path d="M8 1.500l6 3.200v6.600L8 14.500l-6-3.200V4.700zM2 4.700L8 8l6-3.300M8 8v6.500" stroke="#2a2a2a" strokeWidth="2.600" /><path d="M8 1.500l6 3.200v6.600L8 14.500l-6-3.200V4.700zM2 4.700L8 8l6-3.300M8 8v6.500M2 11.300L8 8l6 3.300M8 1.500V8" stroke={G} strokeWidth=".9" /></I></div>
            <T w={65} className="ml-1 mt-px text-[#e0e0e0]">Add Time Tag</T>
          </div>
        </div>
        <div className="flex w-[128px] flex-col">
          <div className="flex h-[26px] items-center">
            <I s={16}><path d="M.7 3v10" stroke={G} strokeWidth="1.500" /><path d="M8 3.500v9L2.500 8zM14.500 3.500v9L9 8z" fill={G} /></I>
            <Sep c="ml-[5px]" />
            <I s={16} c="ml-[4px]"><path d="M7 3.500v9L0 8z" fill={G} /><path d="M9.500 3.500h1.500v9H9.500zM13 3.500h1.500v9H13z" fill={G} /></I>
            <I s={16} c="ml-[7px]"><path d="M1 1l12 7-12 7z" fill={G} /><path d="M17 13v4h-4z" fill={G} /></I>
            <I s={16} c="ml-[6px]"><path d="M9 3.500v9L15.500 8z" fill={G} /><path d="M1 3.500h1.500v9H1zM5 3.500h1.500v9H5z" fill={G} /></I>
            <Sep c="ml-[6px]" />
            <I s={16} c="ml-[3px]"><path d="M14 3v10" stroke={G} strokeWidth="1.500" /><path d="M1 3.500v9L6.500 8zM7.500 3.500v9L13 8z" fill={G} /></I>
          </div>
          <div className="flex h-[20px] items-center">
            <I s={14}><path d="M5.500 3v8L1 7zM8.500 3v8L13 7z" fill={G} /></I>
            <Sep c="ml-[7px]" />
            <div className="ml-px flex h-[18px] w-[69px] items-center justify-between border border-[#525252] bg-[#616161] pl-[2px] pr-[3px] text-[11.500px] text-[#e0e0e0]"><T w={6}>0</T><Spin /></div>
            <I s={16} c="ml-[6px]"><circle cx="6.500" cy="5.500" r="5" fill={G} /><path d="M6.500 2.500v3.500h3" stroke="#333" strokeWidth="1.200" /><circle cx="10.500" cy="11" r="3.500" fill="#444" stroke={OR} strokeWidth="2.200" /></I>
          </div>
        </div>
        <div className={key + "mt-[3px] h-[42px] w-[42px]"}>
          <I s={30}><path d="M13 1v24M1 13h24" stroke={G} strokeWidth="5" /><circle cx="18" cy="24" r="2.800" stroke="#333" strokeWidth="4.200" /><path d="M20 22l8-7" stroke="#333" strokeWidth="4.200" /><circle cx="18" cy="24" r="2.800" stroke={T4} strokeWidth="2.200" /><path d="M20 22l8-7M24.500 18l2 2M26.500 16l2 2" stroke={T4} strokeWidth="2" /></I>
        </div>
        <div className="ml-[5px] mt-[4px] flex w-[46px] flex-col"><div className={key + "h-[19px]"}><T w={44}>Auto Key</T></div><div className={key + "mt-[2px] h-[21px]"}><T w={38}>Set Key</T></div></div>
        <div className="ml-[5px] mt-[3px] flex w-[114px] flex-col">
          <div className="flex h-[19px] items-center justify-between bg-[#636363] pl-[5px] pr-[7px] text-[12px] text-[#dedede]"><T w={41} className="mt-px">Selected</T><Down /></div>
          <div className="mt-[4px] flex h-[21px] items-center"><I s={18} c="ml-[2px]"><path d="M2 3.500q4 1 4 5t-3 8M14 3.500q-4 1-4 5t3 8" stroke={T4} strokeWidth="2.200" /><path d="M6 1h4v4H6z" stroke={G} strokeWidth="1.200" /><path d="M0 3h5M11 3h5" stroke={G} /><path d="M19 14v4h-4z" fill={G} /></I><div className={key + "ml-[6px] h-[20px] w-[88px]"}><T w={63} className="mt-px">Key Filters...</T></div></div>
        </div>
        <div className="ml-[13px] mt-[2px] grid h-[44px] grid-cols-[23px_23px_23px_23px] grid-rows-[22px_22px] items-center">
          <I s={16}><circle cx="10" cy="5.500" r="4.500" stroke={G} strokeWidth="1.700" /><path d="M7 9l-6 6" stroke={G} strokeWidth="2.500" /></I>
          <I s={16}><path d="M6 1h4v4H6zM11 1h4v4h-4zM11 6h4v4h-4z" fill={T4} /><circle cx="6.500" cy="8" r="3.200" fill="#444" stroke={G} strokeWidth="1.500" /><path d="M4 11l-3 3.500" stroke={G} strokeWidth="2" /></I>
          <I s={16}><path d="M1 4V1h3M12 1h3v3M15 12v3h-3M4 15H1v-3" stroke={G} strokeWidth="1.200" /><path d="M8 3l5 2v5l-5 3-5-3V5z" fill={T4} /><path d="M3 5l5 2 5-2M8 7v6" stroke="#2f8080" /><path d="M18 14v4h-4z" fill={G} /></I>
          <I s={16}><path d="M11 1l4 1.500v5L11 10 7.500 8V3z" fill={T4} /><path d="M0 9l4-2v4zM6 9l4 2-4 2zM3 12h3v3z" fill={G} /><path d="M18 14v4h-4z" fill={G} /></I>
          <I s={16}><path d="M1 1.500h13v11H1z" stroke={G} strokeWidth="1.300" strokeDasharray="2 2" /><circle cx="8" cy="7.500" r="3.500" fill="#444" stroke={T4} strokeWidth="1.700" /><path d="M5 10l-4 5" stroke={T4} strokeWidth="2" /></I>
          <div className="-ml-[3px] flex h-[21px] w-[22px] items-center justify-center rounded-[3px] bg-[#5c88c2]"><I s={18}><path d="M5 16L1.500 10.500l1.500-1 2 2V4.500Q5 3 6 3t1 1.500v4V2.500Q7.500 1 8.500 1T9.500 2.500v6-5.500Q10.500 1.500 12 3v6-4q1.500-1 2 .5V12l-2 5H6z" fill="#e0e0e0" stroke="#555" strokeWidth=".8" /><path d="M20 15v4h-4z" fill="#eee" /></I></div>
          <I s={16}><circle cx="7" cy="6" r="5" fill={T4} /><path d="M7 1q-5 1-5 5h5z" fill={G} /><path d="M1 14Q14 14 14 2M5 14q7-2 8-9" stroke={G} strokeWidth="1.800" /><path d="M18 14v4h-4z" fill={G} /></I>
          <I s={16}><path d="M1 1h14v14H1z" fill={G} /><path d="M1 8h6v7" stroke="#444" strokeWidth="1.300" /><path d="M7 9l5-5M8 3.500h4.500V8" stroke="#333" strokeWidth="1.500" /></I>
        </div>
      </div>
    </div>
  );
}

function Adobe({ t, c }) {
  return <div className={"flex h-[21px] w-[21px] items-center justify-center border-2 font-['Open_Sans'] text-[12px] font-semibold leading-none " + c}>{t}</div>;
}

function Taskbar() {
  const cell = "flex h-10 w-[49px] shrink-0 items-center justify-center ";
  return (
    <div className="flex h-10 items-center bg-black text-white">
      <div className="flex h-10 w-12 items-center justify-center"><svg width="16" height="16" viewBox="0 0 16 16" fill="#fff"><path d="M0 2.500l7-1v6H0zM8 1.300L16 0v7.500H8zM0 8.500h7v6l-7-1zM8 8.500h8V16l-8-1.300z" /></svg></div>
      <div className="flex h-10 w-12 items-center justify-center"><I s={18}><circle cx="11" cy="6.500" r="5.500" stroke="#fff" strokeWidth="1.400" /><path d="M7 10.500L1.500 16.500" stroke="#fff" strokeWidth="1.400" /></I></div>
      <div className="flex h-10 w-[48px] items-center justify-center"><I s={20}><path d="M4.500 3.500h11v13h-11zM3 5H.5v10H3M17 5h2.500v10H17" stroke="#fff" strokeWidth="1.200" /></I></div>
      <div className={cell + "ml-[3px]"}><I s={22}><path d="M0 2h8l2 2h12v16H0z" fill="#f7d774" /><path d="M0 7h22v13H0z" fill="#ffe69a" /><path d="M4 20v-8q0-1 1-1h12q1 0 1 1v8h-4v-4H8v4z" fill="#3fa9dd" /></I></div>
      <div className={cell}><I s={24}><path d="M7 6q0-5 5-5t5 5" stroke="#fff" strokeWidth="1.400" /><path d="M1 6h22v17H1z" fill="#fff" /><path d="M7 10h4.500v4.500H7z" fill="#f25022" /><path d="M12.500 10H17v4.500h-4.500z" fill="#7fba00" /><path d="M7 15.500h4.500V20H7z" fill="#00a4ef" /><path d="M12.500 15.500H17V20h-4.500z" fill="#ffb900" /></I></div>
      <div className={cell + "text-[22px] text-[#1ed760]"}><FaSpotify /></div>
      <div className="flex h-10 w-[49px] shrink-0 flex-col items-center pt-[9px]">
        <I s={22}><circle cx="11" cy="11" r="11" fill="#f1c232" /><path d="M11 5.500h9.500A11 11 0 0 0 1.500 5.500l5 8.500z" fill="#db4437" /><path d="M1.500 5.500A11 11 0 0 0 10 22l5-8H7z" fill="#1c9b54" /><circle cx="11" cy="11" r="5.200" fill="#f2f2f2" /><circle cx="11" cy="11" r="4" fill="#4b86ee" /></I>
        <div className="mt-[7px] h-[2px] w-10 bg-[#96efc2]" />
      </div>
      <div className={cell}><I s={24}><path d="M0 0h24v24H0z" fill="#f4e0d8" /><path d="M3 20L11 2h5l5 18h-5l-1-4H9l-1.500 4zM10 13h4L12.500 7z" fill="#c4232b" fillRule="evenodd" /><path d="M11 2h3L7 20H3z" fill="#8d141b" /></I></div>
      <div className={cell}><I s={24}><circle cx="12" cy="12" r="11.300" fill="#40454e" stroke="#6c727c" strokeDasharray="2 1" /><path d="M6 9h10q0 4-3 9" stroke="#f0f0f0" strokeWidth="2.500" strokeDasharray="2 .7" /></I></div>
      <div className={cell}><I s={22}><path d="M1 1h20v20H1z" fill="#220505" stroke="#e4180c" strokeWidth="2" /><path d="M4 17c5-2 7-7 6.500-12 0-2 2-1 1.500 1-2 6 3 9 7 8.500-4-2.500-9-1-15 2.500z" stroke="#e0e0e0" strokeWidth="1.300" /></I></div>
      <div className="flex h-10 w-12 shrink-0 flex-col items-center border-r-4 border-[#1f1f1f] bg-[#333] pt-2">
        <I s={24} c="ml-[4px]"><path d="M0 0h24v24H0z" fill="#e4f3f3" /><text x="6" y="17" fontSize="19" className="font-['Open_Sans'] font-extrabold" fill="#14838c">3</text><path d="M13 21h9" stroke="#38b4bc" strokeWidth="2.500" strokeDasharray="2.500 .8" /></I>
        <div className="mt-[6px] h-[2px] w-12 shrink-0 translate-x-[2px] bg-[#96efc2]" />
      </div>
      <div className={cell}><Adobe t="Id" c="border-[#f03a85] bg-[#27000f] text-[#f03a85]" /></div>
      <div className={cell}><Adobe t="Ps" c="border-[#00b9f2] bg-[#001c26] text-[#00b9f2]" /></div>
      <div className={cell}><Adobe t="Ai" c="border-[#f77f00] bg-[#2a1400] text-[#f77f00]" /></div>
      <div className={cell}><div className="flex h-6 w-6 justify-center rounded-sm bg-gradient-to-b from-[#4b93dd] to-[#2c62b4] font-['Liberation_Serif'] leading-none text-[#d6ec8c]"><span className="mt-px text-[13px]">H</span><span className="mt-[10px] text-[12px] font-bold">9:</span></div></div>
      <div className="flex h-10 w-[49px] shrink-0 flex-col items-center pt-2">
        <div className="flex h-6 w-6 items-center justify-center rounded-full border-2 border-[#e8dcf0] bg-[#6c3aa0] text-[15px] text-white"><FaGithubAlt /></div>
        <div className="mt-[6px] h-[2px] w-10 bg-[#96efc2]" />
      </div>
      <I s={14} c="ml-[369px]"><path d="M1.500 10l5.500-5.500 5.500 5.500" stroke="#fff" strokeWidth="1.500" /></I>
      <I s={14} c="ml-[12px]"><g stroke="#bbb" strokeWidth="1.300"><path d="M1 13Q1 2 13 1.500M4 13Q4.500 5.500 13 5M7 13q.5-5 6-5" /></g><circle cx="11.500" cy="12" r="1.800" fill="#fff" /></I>
      <I s={16} c="ml-[8px]"><path d="M4 4.500h10.500v7H4z" stroke="#fff" /><path d="M6 6h7v4H6zM15 6.500h1.500v3H15z" fill="#fff" /><path d="M1 3.500h4v2L4 7H2L1 5.500zM1.500 1v2.500M4.500 1v2.500M3 7v4" fill="#fff" stroke="#fff" /></I>
      <I s={15} c="ml-[8px]"><path d="M.5 5.500h2L5.500 2v11l-3-3.500h-2z" stroke="#fff" /><path d="M9.500 5l5 5M14.500 5l-5 5" stroke="#fff" strokeWidth="1.200" /></I>
      <div className="ml-[9px] flex w-[60px] flex-col items-center text-[12px]"><T w={26}>15:11</T><T w={58} className="mt-[6px]">14/02/2018</T></div>
      <I s={18} c="ml-[15px] mt-px"><path d="M1.500 1.500h15v12h-5l-3 3v-3h-7z" stroke="#fff" strokeWidth="1.300" /></I>
      <div className="ml-[19px] h-10 w-px bg-[#666]" />
    </div>
  );
}

export default function App() {
  return (
    <div className="h-[768px] w-[1366px] overflow-hidden bg-[#444] font-['Noto_Sans',sans-serif]">
      <TitleBar />
      <MenuBar />
      <Toolbar />
      <div className="flex h-[570px]">
        <LeftPanel />
        <div className="-mt-px"><Viewport /></div>
        <RightPanel />
      </div>
      <StatusBar />
      <Taskbar />
    </div>
  );
}
